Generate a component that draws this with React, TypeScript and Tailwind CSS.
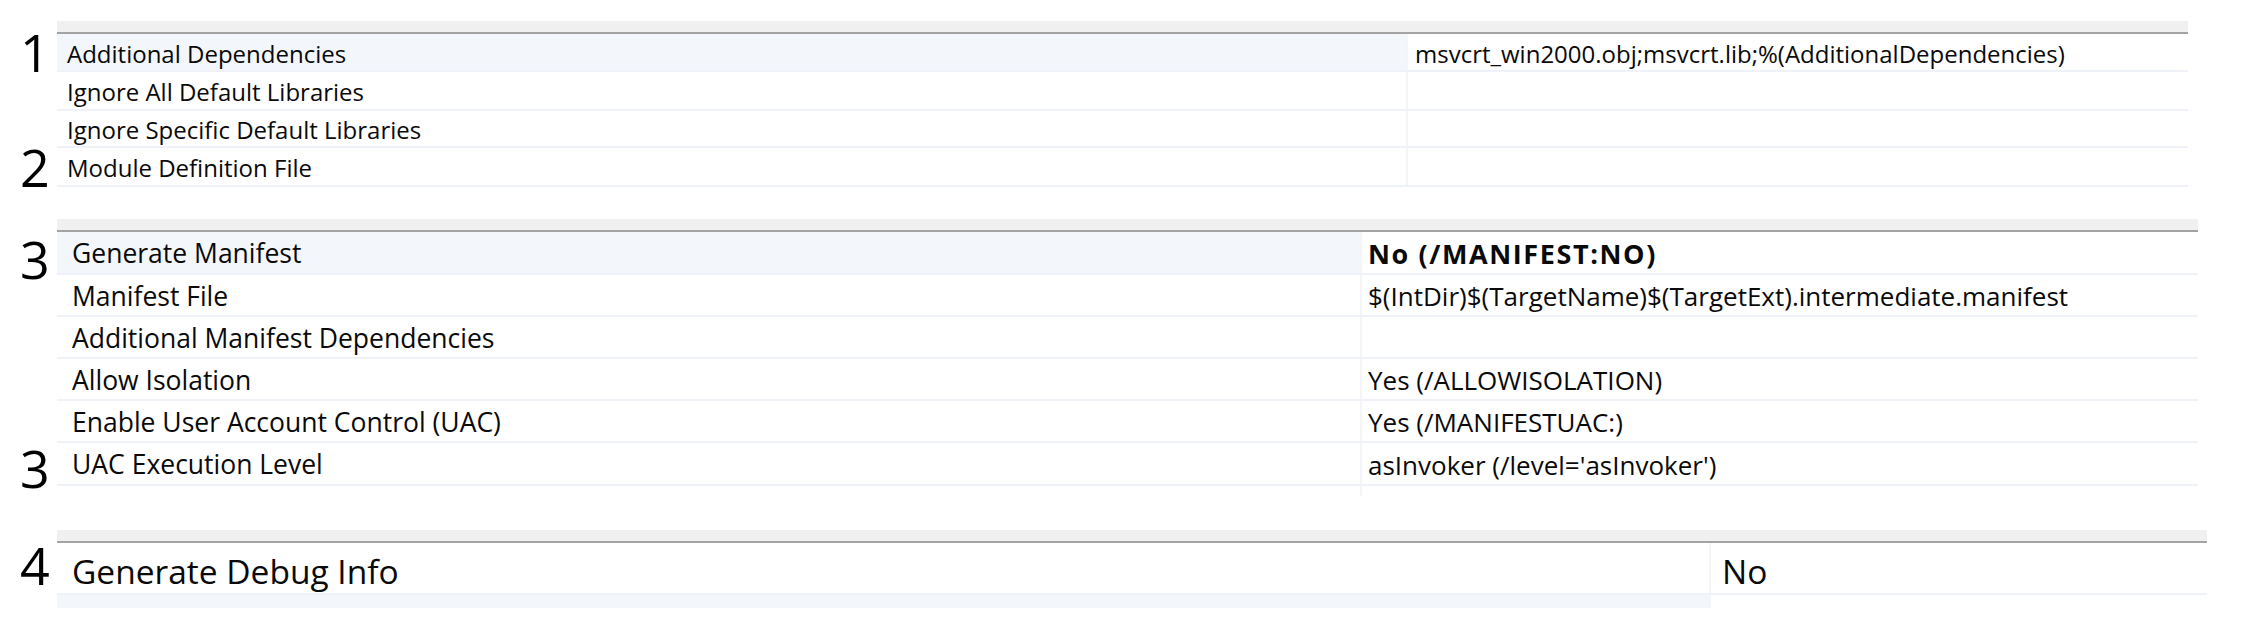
import React from "react";

type Row = { label: string; value: string; selected?: boolean; bold?: boolean; h: number; num?: { n: string; bottom: number } };

type Panel = {
  labelW: number;
  totalW: number;
  labelPad: string;
  valuePad: string;
  labelFont: string;
  valueFont: string;
  textPt: string;
  rows: Row[];
};

const panel1: Panel = {
  labelW: 1349,
  totalW: 2131,
  labelPad: "pl-[10px]",
  valuePad: "pl-[7px]",
  labelFont: "text-[24px]",
  valueFont: "text-[24px]",
  textPt: "pt-[3px]",
  rows: [
    { label: "Additional Dependencies", value: "msvcrt_win2000.obj;msvcrt.lib;%(AdditionalDependencies)", selected: true, h: 38, num: { n: "1", bottom: -6 } },
    { label: "Ignore All Default Libraries", value: "", h: 39 },
    { label: "Ignore Specific Default Libraries", value: "", h: 37 },
    { label: "Module Definition File", value: "", h: 39, num: { n: "2", bottom: -6 } },
  ],
};

const panel2: Panel = {
  labelW: 1303,
  totalW: 2141,
  labelPad: "pl-[15px]",
  valuePad: "pl-[6px]",
  labelFont: "text-[26.5px]",
  valueFont: "text-[26px]",
  textPt: "pt-[3px]",
  rows: [
    { label: "Generate Manifest", value: "No (/MANIFEST:NO)", selected: true, bold: true, h: 43, num: { n: "3", bottom: -10 } },
    { label: "Manifest File", value: "$(IntDir)$(TargetName)$(TargetExt).intermediate.manifest", h: 42 },
    { label: "Additional Manifest Dependencies", value: "", h: 42 },
    { label: "Allow Isolation", value: "Yes (/ALLOWISOLATION)", h: 42 },
    { label: "Enable User Account Control (UAC)", value: "Yes (/MANIFESTUAC:)", h: 42 },
    { label: "UAC Execution Level", value: "asInvoker (/level='asInvoker')", h: 43, num: { n: "3", bottom: -8 } },
  ],
};

function Num({ n, bottom }: { n: string; bottom: number }) {
  return (
    <span
      className="absolute left-[20px] text-[52px] leading-none font-normal text-black"
      style={{ bottom }}
    >
      {n}
    </span>
  );
}

function PanelView({ p }: { p: Panel }) {
  return (
    <div className="flex flex-col">
      <div className="flex">
        <div className="w-[57px] shrink-0" />
        <div
          className="h-[13px] bg-[#f0f0f0] border-b-2 border-[#a3a3a3]"
          style={{ width: p.totalW }}
        />
      </div>
      {p.rows.map((r, i) => (
        <div key={i} className="flex" style={{ height: r.h }}>
          <div className="w-[57px] shrink-0 relative">{r.num && <Num n={r.num.n} bottom={r.num.bottom} />}</div>
          <div className="flex border-b-2 border-[#eff3f9]" style={{ width: p.totalW }}>
            <div
              className={`shrink-0 flex items-center ${p.labelPad} ${p.textPt} ${p.labelFont} ${r.selected ? "bg-[#f3f6fb]" : "bg-white"}`}
              style={{ width: p.labelW }}
            >
              <span className="whitespace-nowrap">{r.label}</span>
            </div>
            <div className={`flex-1 flex items-center border-l-2 border-[#f3f5f9] ${p.valuePad} ${p.textPt} ${p.valueFont}`}>
              <span className={`whitespace-nowrap ${r.bold ? "font-bold text-[27px] tracking-[1.6px]" : ""}`}>{r.value}</span>
            </div>
          </div>
        </div>
      ))}
    </div>
  );
}

export default function App() {
  return (
    <div className="w-[2250px] h-[638px] overflow-hidden bg-white text-[#0a0a0a] font-['Open_Sans',sans-serif] pt-[21px]">
      <div>
        <PanelView p={panel1} />
      </div>
      <div className="mt-[32px]">
        <PanelView p={panel2} />
        <div className="flex h-[10px]">
          <div className="w-[57px] shrink-0" />
          <div className="flex w-[2141px]">
            <div className="w-[1303px] shrink-0 bg-white" />
            <div className="flex-1 border-l-2 border-[#f3f5f9]" />
          </div>
        </div>
      </div>
      <div className="text-[33.5px] mt-[34px] flex flex-col">
        <div className="flex">
          <div className="w-[57px] shrink-0" />
          <div className="w-[2150px] h-[13px] bg-[#f0f0f0] border-b-2 border-[#a3a3a3]" />
        </div>
        <div className="flex h-[52px]">
          <div className="w-[57px] shrink-0 relative">
            <Num n="4" bottom={4} />
          </div>
          <div className="flex w-[2150px] border-b-2 border-[#eff3f9]">
            <div className="w-[1652px] shrink-0 flex items-center pl-[15px] pt-[6px] bg-white">
              <span className="whitespace-nowrap">Generate Debug Info</span>
            </div>
            <div className="flex-1 flex items-center pl-[11px] pt-[6px] border-l-2 border-[#f3f5f9]">
              <span className="whitespace-nowrap">No</span>
            </div>
          </div>
        </div>
        <div className="flex h-[13px]">
          <div className="w-[57px] shrink-0" />
          <div className="flex w-[2150px]">
            <div className="w-[1652px] shrink-0 bg-[#f3f6fb]" />
            <div className="flex-1 border-l-2 border-[#f3f5f9] bg-white" />
          </div>
        </div>
      </div>
    </div>
  );
}
